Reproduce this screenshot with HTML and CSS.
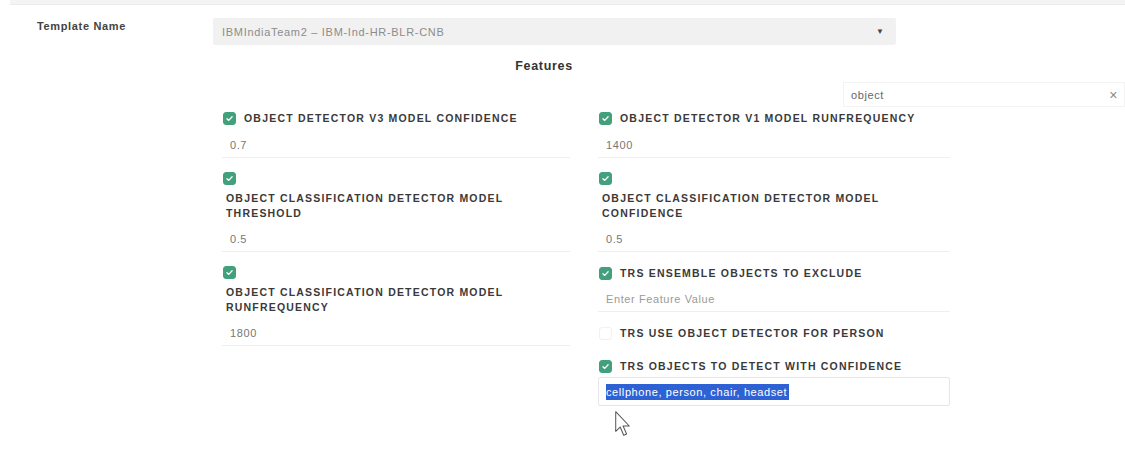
FILE: index.html
```html
<!DOCTYPE html>
<html lang="en">
<head>
    <meta charset="UTF-8">
    <meta name="viewport" content="width=device-width, initial-scale=1.0">
    <title>Template Features</title>
    <link rel="stylesheet" href="styles.css">
</head>
<body>
    <div class="topbar"></div>
    <div class="page">
        <!-- template picker -->
        <div class="template-row">
            <label class="template-label" for="template">Template Name</label>
            <div class="select-box" id="template">
                <span>IBMIndiaTeam2 &ndash; IBM-Ind-HR-BLR-CNB</span>
                <span class="caret">&#9660;</span>
            </div>
        </div>

        <div class="features">
            <h2 class="features-title">Features</h2>
            <div class="search-row">
                <div class="search-box">
                    <span>object</span>
                    <span class="clear">&times;</span>
                </div>
            </div>

            <div class="feature-grid">
                <div class="feature-col">
                    <div class="field">
                        <div class="field-head">
                            <span class="check on"><svg viewBox="0 0 13 13"><path d="M3.5 6.8 L5.6 8.8 L9.6 4.4" /></svg></span>
                            <span class="field-label">OBJECT DETECTOR V3 MODEL CONFIDENCE</span>
                        </div>
                        <div class="field-value">0.7</div>
                    </div>
                    <div class="field stacked">
                        <div class="field-head">
                            <span class="check on"><svg viewBox="0 0 13 13"><path d="M3.5 6.8 L5.6 8.8 L9.6 4.4" /></svg></span>
                            <span class="field-label">OBJECT CLASSIFICATION DETECTOR MODEL THRESHOLD</span>
                        </div>
                        <div class="field-value">0.5</div>
                    </div>
                    <div class="field stacked">
                        <div class="field-head">
                            <span class="check on"><svg viewBox="0 0 13 13"><path d="M3.5 6.8 L5.6 8.8 L9.6 4.4" /></svg></span>
                            <span class="field-label">OBJECT CLASSIFICATION DETECTOR MODEL RUNFREQUENCY</span>
                        </div>
                        <div class="field-value">1800</div>
                    </div>
                </div>

                <div class="feature-col">
                    <div class="field">
                        <div class="field-head">
                            <span class="check on"><svg viewBox="0 0 13 13"><path d="M3.5 6.8 L5.6 8.8 L9.6 4.4" /></svg></span>
                            <span class="field-label">OBJECT DETECTOR V1 MODEL RUNFREQUENCY</span>
                        </div>
                        <div class="field-value">1400</div>
                    </div>
                    <div class="field stacked">
                        <div class="field-head">
                            <span class="check on"><svg viewBox="0 0 13 13"><path d="M3.5 6.8 L5.6 8.8 L9.6 4.4" /></svg></span>
                            <span class="field-label">OBJECT CLASSIFICATION DETECTOR MODEL CONFIDENCE</span>
                        </div>
                        <div class="field-value">0.5</div>
                    </div>
                    <div class="field">
                        <div class="field-head">
                            <span class="check on"><svg viewBox="0 0 13 13"><path d="M3.5 6.8 L5.6 8.8 L9.6 4.4" /></svg></span>
                            <span class="field-label">TRS ENSEMBLE OBJECTS TO EXCLUDE</span>
                        </div>
                        <div class="field-value placeholder">Enter Feature Value</div>
                    </div>
                    <div class="field empty">
                        <div class="field-head">
                            <span class="check"></span>
                            <span class="field-label">TRS USE OBJECT DETECTOR FOR PERSON</span>
                        </div>
                    </div>
                    <div class="field">
                        <div class="field-head">
                            <span class="check on"><svg viewBox="0 0 13 13"><path d="M3.5 6.8 L5.6 8.8 L9.6 4.4" /></svg></span>
                            <span class="field-label">TRS OBJECTS TO DETECT WITH CONFIDENCE</span>
                        </div>
                        <div class="field-value boxed"><span class="selected">cellphone, person, chair, headset</span></div>
                        <svg class="pointer" viewBox="0 0 16 25" width="18" height="28">
                            <path d="M1.5 1.5 L1.5 19 L5.5 15.2 L8.6 22.5 L11.2 21.4 L8.1 14.3 L13.6 14.3 Z" />
                        </svg>
                    </div>
                </div>
            </div>
        </div>
    </div>
</body>
</html>
```

FILE: styles.css
```css
*{
    box-sizing: border-box;
    margin: 0;
    padding: 0;
}
body{
    background-color: #fff;
    font-family: "Liberation Sans", Arial, sans-serif;
    color: #333;
    overflow: hidden;
    width: 1125px;
    height: 449px;
}
.topbar{
    height: 5px;
    margin-left: 10px;
    background-color: #f4f4f4;
    border-bottom: 1px solid #ebebeb;
}
.template-row{
    display: flex;
    align-items: flex-start;
    padding: 13px 0 0 37px;
}
.template-label{
    width: 176px;
    font-size: 11px;
    font-weight: 700;
    letter-spacing: 0.65px;
    color: #444;
    padding-top: 2px;
}
.select-box{
    width: 683px;
    height: 27px;
    display: flex;
    align-items: center;
    justify-content: space-between;
    padding: 0 12px 0 9px;
    background-color: #f1f1f1;
    border-radius: 2px;
    font-size: 11px;
    letter-spacing: 0.7px;
    color: #8c8c8c;
}
.caret{
    font-size: 8px;
    letter-spacing: 0;
    color: #444;
}
.features{
    margin-left: 213px;
}
.features-title{
    width: 662px;
    margin-top: 14px;
    text-align: center;
    font-size: 12.5px;
    font-weight: 700;
    letter-spacing: 0.7px;
    color: #333;
}
.search-row{
    display: flex;
    margin-top: 9px;
}
.search-box{
    margin-left: 630px;
    width: 284px;
    height: 25px;
    display: flex;
    align-items: center;
    justify-content: space-between;
    padding: 0 6px 0 7px;
    border: 1px solid #f3f3f3;
    font-size: 11px;
    letter-spacing: 0.6px;
    color: #666;
}
.clear{
    font-size: 14px;
    color: #888;
}
.feature-grid{
    display: grid;
    grid-template-columns: 348px 352px;
    column-gap: 28px;
    margin: 4px 0 0 9px;
    width: 728px;
}
.feature-col{
    display: flex;
    flex-direction: column;
}
.field{
    position: relative;
    margin-bottom: 14px;
}
.field.empty{
    margin-bottom: 18px;
}
.field-head{
    display: flex;
    align-items: center;
    gap: 8px;
    min-height: 15px;
}
.field-label{
    font-size: 10.5px;
    font-weight: 700;
    letter-spacing: 1.2px;
    color: #3a3a3a;
    line-height: 15px;
}
.stacked .field-head{
    flex-direction: column;
    align-items: flex-start;
    gap: 6px;
}
.stacked .field-label{
    padding-left: 4px;
    max-width: 300px;
}
.check{
    width: 13px;
    height: 13px;
    flex: none;
    border-radius: 3px;
    border: 1px solid #f1f1f1;
    display: flex;
    align-items: center;
    justify-content: center;
    margin-left: 1px;
}
.check.on{
    background-color: #43a07d;
    border-color: #43a07d;
}
.check svg{
    width: 13px;
    height: 13px;
}
.check path{
    fill: none;
    stroke: #fff;
    stroke-width: 1.5;
    stroke-linecap: round;
    stroke-linejoin: round;
}
.field-value{
    height: 26px;
    margin-top: 6px;
    padding-left: 8px;
    display: flex;
    align-items: center;
    font-size: 11px;
    letter-spacing: 0.6px;
    color: #777;
    border-bottom: 1px solid #efefef;
}
.stacked .field-value{
    margin-top: 5px;
}
.field-value.placeholder{
    color: #9a9a9a;
    margin-top: 5px;
}
.field-value.boxed{
    height: 29px;
    margin-top: 3px;
    border: 1px solid #e6e6e6;
    border-radius: 2px;
    padding-left: 7px;
}
.selected{
    background-color: #2e62d4;
    color: #fff;
    line-height: 16px;
    padding-right: 2px;
}
.pointer{
    position: absolute;
    left: 16px;
    top: 51px;
}
.pointer path{
    fill: #fff;
    stroke: #555;
    stroke-width: 0.9;
    stroke-linejoin: round;
}
```
